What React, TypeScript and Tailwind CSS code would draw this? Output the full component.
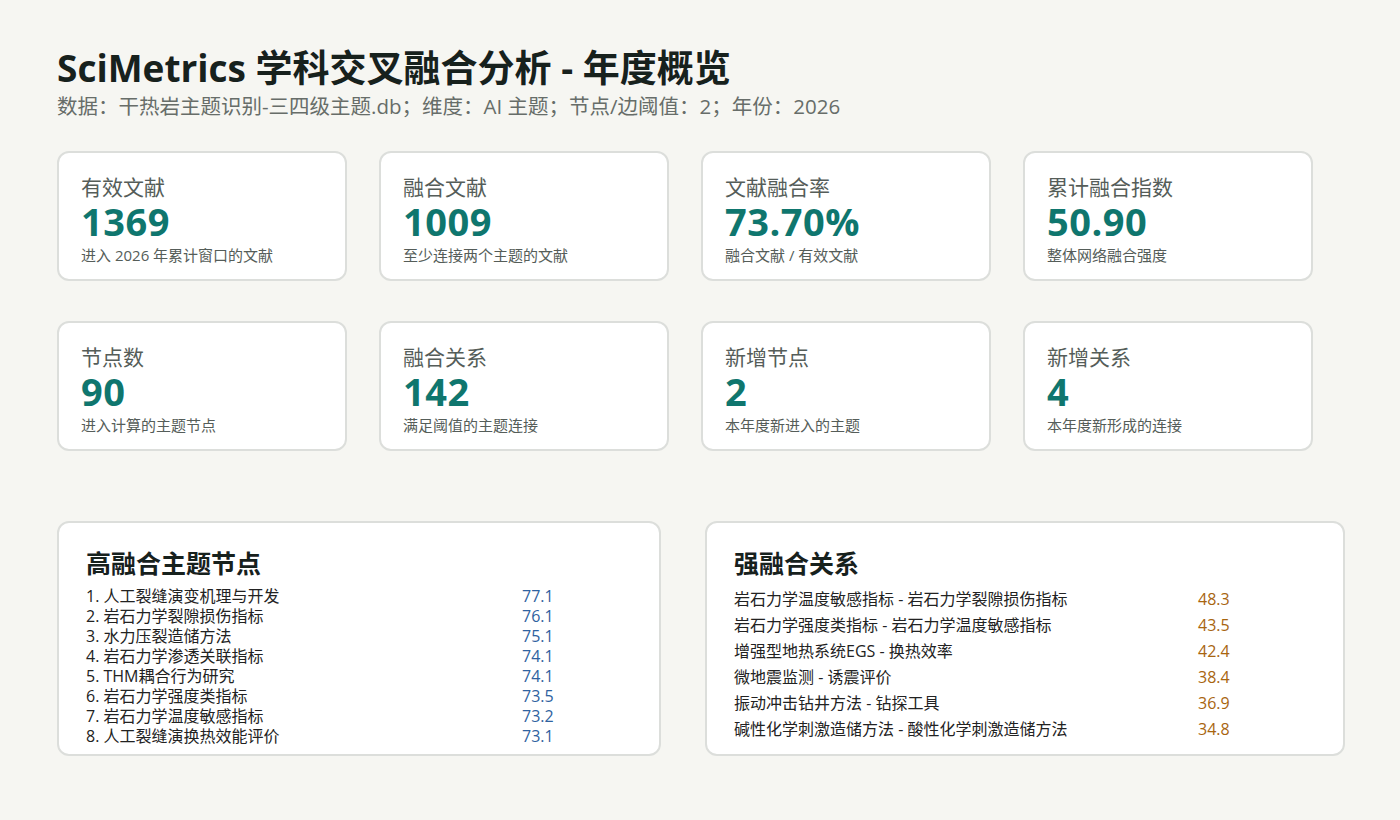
const font = { fontFamily: '"Open Sans", "Noto Sans CJK SC", sans-serif' };

const cards1 = [
  ["有效文献", "1369", "进入 2026 年累计窗口的文献"],
  ["融合文献", "1009", "至少连接两个主题的文献"],
  ["文献融合率", "73.70%", "融合文献 / 有效文献"],
  ["累计融合指数", "50.90", "整体网络融合强度"],
];
const cards2 = [
  ["节点数", "90", "进入计算的主题节点"],
  ["融合关系", "142", "满足阈值的主题连接"],
  ["新增节点", "2", "本年度新进入的主题"],
  ["新增关系", "4", "本年度新形成的连接"],
];
const nodes = [
  ["1. 人工裂缝演变机理与开发", "77.1"],
  ["2. 岩石力学裂隙损伤指标", "76.1"],
  ["3. 水力压裂造储方法", "75.1"],
  ["4. 岩石力学渗透关联指标", "74.1"],
  ["5. THM耦合行为研究", "74.1"],
  ["6. 岩石力学强度类指标", "73.5"],
  ["7. 岩石力学温度敏感指标", "73.2"],
  ["8. 人工裂缝演换热效能评价", "73.1"],
];
const rels = [
  ["岩石力学温度敏感指标 - 岩石力学裂隙损伤指标", "48.3"],
  ["岩石力学强度类指标 - 岩石力学温度敏感指标", "43.5"],
  ["增强型地热系统EGS - 换热效率", "42.4"],
  ["微地震监测 - 诱震评价", "38.4"],
  ["振动冲击钻井方法 - 钻探工具", "36.9"],
  ["碱性化学刺激造储方法 - 酸性化学刺激造储方法", "34.8"],
];

function Row({ items }: { items: string[][] }) {
  return (
    <div className="flex gap-[32px]">
      {items.map(([l, v, s]) => (
        <div key={l} className="w-[290px] h-[130px] bg-white border-2 border-[#dcdedb] rounded-[12px] pl-[22px] pt-[20px]">
          <div className="text-[21px] leading-[28px] text-[#555d59]">{l}</div>
          <div className="text-[38px] leading-[40px] font-bold text-[#0f766e] tracking-[0.5px]">{v}</div>
          <div className="text-[15px] leading-[22px] text-[#555d59] mt-[3px]">{s}</div>
        </div>
      ))}
    </div>
  );
}

export default function App() {
  return (
    <div className="w-[1400px] h-[820px] bg-[#f6f6f2] pl-[57px] pt-[44px] text-[#1c2420]" style={font}>
      <h1 className="text-[37px] leading-[48px] font-bold text-[#17211d]">SciMetrics 学科交叉融合分析 - 年度概览</h1>
      <div className="text-[20.5px] leading-[26px] text-[#676d69] mt-[1px]">数据：干热岩主题识别-三四级主题.db；维度：AI 主题；节点/边阈值：2；年份：2026</div>
      <div className="mt-[32px] flex flex-col gap-[40px]">
        <Row items={cards1} />
        <Row items={cards2} />
      </div>
      <div className="mt-[70px] flex gap-[44px]">
        <div className="w-[604px] h-[235px] bg-white border-2 border-[#dcdedb] rounded-[12px] pl-[27px] pt-[24px]">
          <div className="text-[25px] leading-[32px] font-bold text-[#17211d]">高融合主题节点</div>
          <div className="mt-[7px]">
            {nodes.map(([n, v]) => (
              <div key={n} className="flex text-[16px] leading-[20px]">
                <div className="w-[436px] text-[#222]">{n}</div>
                <div className="text-[#2f62a0]">{v}</div>
              </div>
            ))}
          </div>
        </div>
        <div className="w-[640px] h-[235px] bg-white border-2 border-[#dcdedb] rounded-[12px] pl-[27px] pt-[24px]">
          <div className="text-[25px] leading-[32px] font-bold text-[#17211d]">强融合关系</div>
          <div className="mt-[7px]">
            {rels.map(([n, v]) => (
              <div key={n} className="flex text-[16px] leading-[26px]">
                <div className="w-[464px] text-[#222]">{n}</div>
                <div className="text-[#a8650f]">{v}</div>
              </div>
            ))}
          </div>
        </div>
      </div>
    </div>
  );
}
